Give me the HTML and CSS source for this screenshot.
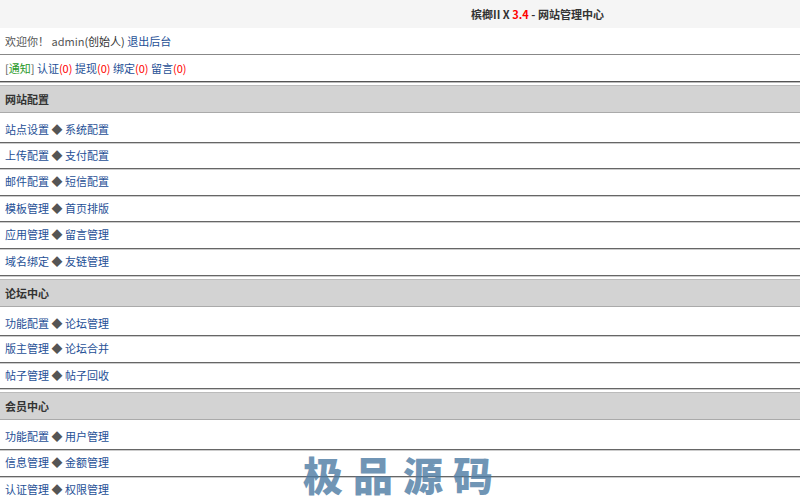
FILE: index.html
```html
<!DOCTYPE html>
<html lang="zh-CN">
<head>
<meta charset="utf-8">
<title>网站管理中心</title>
<link rel="stylesheet" href="styles.css">
</head>
<body>
<div class="top"><span class="title">槟榔II X <em>3.4</em> - 网站管理中心</span></div>
<div class="line welcome">欢迎你！ admin<span class="role">(创始人)</span> <a href="#">退出后台</a></div>
<div class="line notice"><span class="br">[<span class="green">通知</span>]</span> <a href="#">认证<span class="red">(0)</span></a> <a href="#">提现<span class="red">(0)</span></a> <a href="#">绑定<span class="red">(0)</span></a> <a href="#">留言<span class="red">(0)</span></a></div>

<div class="sec">网站配置</div>
<div class="row first"><a href="#">站点设置</a> <span class="dia">◆</span> <a href="#">系统配置</a></div>
<div class="row"><a href="#">上传配置</a> <span class="dia">◆</span> <a href="#">支付配置</a></div>
<div class="row"><a href="#">邮件配置</a> <span class="dia">◆</span> <a href="#">短信配置</a></div>
<div class="row"><a href="#">模板管理</a> <span class="dia">◆</span> <a href="#">首页排版</a></div>
<div class="row"><a href="#">应用管理</a> <span class="dia">◆</span> <a href="#">留言管理</a></div>
<div class="row"><a href="#">域名绑定</a> <span class="dia">◆</span> <a href="#">友链管理</a></div>

<div class="sec">论坛中心</div>
<div class="row first"><a href="#">功能配置</a> <span class="dia">◆</span> <a href="#">论坛管理</a></div>
<div class="row"><a href="#">版主管理</a> <span class="dia">◆</span> <a href="#">论坛合并</a></div>
<div class="row"><a href="#">帖子管理</a> <span class="dia">◆</span> <a href="#">帖子回收</a></div>

<div class="sec">会员中心</div>
<div class="row first"><a href="#">功能配置</a> <span class="dia">◆</span> <a href="#">用户管理</a></div>
<div class="row"><a href="#">信息管理</a> <span class="dia">◆</span> <a href="#">金额管理</a></div>
<div class="row"><a href="#">认证管理</a> <span class="dia">◆</span> <a href="#">权限管理</a></div>

<div class="watermark">极品源码</div>
</body>
</html>
```
FILE: styles.css
```css
html, body {
  margin: 0;
  padding: 0;
  background: #fff;
}
body {
  font-family: "Noto Sans CJK SC", "Noto Sans", sans-serif;
  font-size: 11px;
  color: #555;
  position: relative;
  overflow: hidden;
  height: 500px;
}
a {
  color: #1e4f96;
  text-decoration: none;
}
.top {
  height: 28px;
  line-height: 28px;
  background: #f5f5f5;
  text-align: center;
  padding-left: 275px;
}
.title {
  font-weight: bold;
  color: #333;
}
.title em {
  font-style: normal;
  color: #f00;
}
.line {
  height: 26px;
  line-height: 26px;
  padding-left: 5px;
  white-space: nowrap;
}
.welcome {
  border-bottom: 1px solid #888;
}
.role {
  color: #333;
}
.notice {
  border-bottom: 1px solid #555;
  box-shadow: 0 1px 0 #bbb;
}
.br {
  color: #555;
}
.green {
  color: #2a9a2a;
}
.red {
  color: #f00;
}
.sec {
  margin-top: 3px;
  height: 26px;
  line-height: 26px;
  background: #d3d3d3;
  border-top: 1px solid #bbb;
  border-bottom: 1px solid #aaa;
  padding-left: 5px;
  font-weight: bold;
  color: #333;
}
.row {
  height: 25.6px;
  line-height: 25.6px;
  padding-left: 5px;
  white-space: nowrap;
  border-bottom: 1px solid #666;
  box-shadow: 0 1px 0 #ccc;
}
.row.first {
  height: 23.6px;
  line-height: 23.6px;
  padding-top: 5px;
}
.dia {
  color: #555;
}
.watermark {
  position: absolute;
  left: 303px;
  top: 454px;
  font-size: 40px;
  font-weight: 900;
  letter-spacing: 10px;
  color: #4d7ba3;
  opacity: 0.8;
  line-height: 40px;
  white-space: nowrap;
}
```
